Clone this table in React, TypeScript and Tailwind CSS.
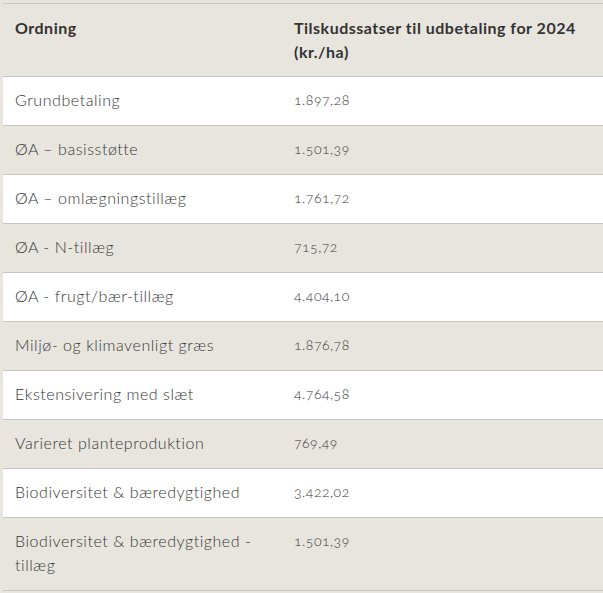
const rows = [
  { name: "Grundbetaling", rate: "1.897,28" },
  { name: "ØA – basisstøtte", rate: "1.501,39" },
  { name: "ØA – omlægningstillæg", rate: "1.761,72" },
  { name: "ØA - N-tillæg", rate: "715,72" },
  { name: "ØA - frugt/bær-tillæg", rate: "4.404,10" },
  { name: "Miljø- og klimavenligt græs", rate: "1.876,78" },
  { name: "Ekstensivering med slæt", rate: "4.764,58" },
  { name: "Varieret planteproduktion", rate: "769,49" },
  { name: "Biodiversitet & bæredygtighed", rate: "3.422,02" },
  { name: "Biodiversitet & bæredygtighed - tillæg", rate: "1.501,39" },
];

export default function App() {
  return (
    <div className="min-h-[593px] w-[603px] bg-[#e8e5de] pl-[3px] pt-[3px] font-['Lato','Liberation_Sans',sans-serif] text-[#363636]">
      <table className="w-full border-collapse border-t border-[#c8c5bf]">
        <thead>
          <tr className="border-b border-[#c8c5bf] bg-[#e8e5de]">
            <th className="w-[279px] px-3 py-3 text-left align-top text-[16px] leading-6 font-bold tracking-[0.5px] text-[#333]">
              Ordning
            </th>
            <th className="px-3 py-3 text-left align-top text-[16px] leading-6 font-bold tracking-[0.5px] text-[#333]">
              Tilskudssatser til udbetaling for 2024 (kr./ha)
            </th>
          </tr>
        </thead>
        <tbody>
          {rows.map((row, i) => (
            <tr
              key={row.name}
              className={
                "border-b border-[#c8c5bf] " +
                (i % 2 === 0 ? "bg-white" : "bg-[#e8e5de]")
              }
            >
              <td className="px-3 pt-[11px] pb-[13px] align-top text-[16px] leading-6 font-light tracking-[0.55px]">
                {row.name}
              </td>
              <td className="px-3 pt-[11px] pb-[13px] align-top text-[14px] leading-6 font-light tracking-[0.5px] oldstyle-nums">
                {row.rate}
              </td>
            </tr>
          ))}
        </tbody>
      </table>
    </div>
  );
}
